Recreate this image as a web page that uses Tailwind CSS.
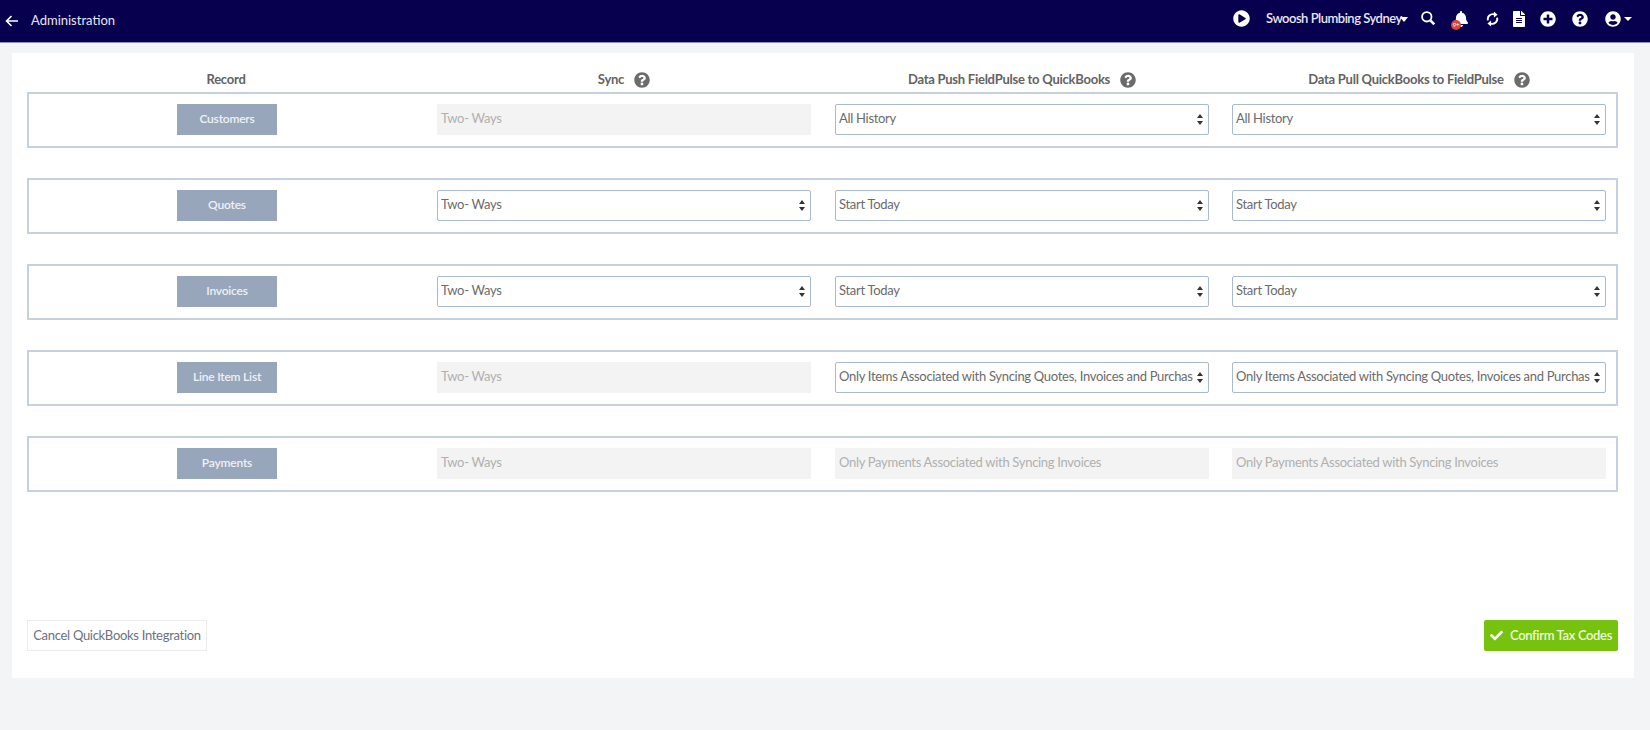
<!DOCTYPE html>
<html lang="en">
<head>
  <meta charset="UTF-8" />
  <meta name="viewport" content="width=device-width, initial-scale=1.0" />
  <title>Administration</title>
  <script src="https://cdn.jsdelivr.net/npm/@tailwindcss/browser@4"></script>
</head>
<body class="bg-[#f2f4f6] text-[#6b6b6b] font-['Lato',sans-serif] text-[13px] tracking-[-0.3px] h-[730px] overflow-hidden">
  <!-- Header -->
  <header class="h-[43px] bg-[#07004f] border-b border-[#8f8fbf] flex items-center justify-between text-[#e6e6f0]">
    <div class="flex items-center">
      <svg class="ml-[5px] w-[13px] h-[12px]" viewBox="0 0 13 12" fill="none" stroke="#fff" stroke-width="1.6"><path d="M13 6H1.5M6.5 1L1.5 6l5 5"/></svg>
      <span class="ml-[13px] tracking-normal">Administration</span>
    </div>
    <div class="flex items-center text-white mb-[5px]">
      <svg class="w-[17px] h-[17px]" viewBox="0 0 512 512" fill="currentColor"><path d="M256 8C119 8 8 119 8 256s111 248 248 248 248-111 248-248S393 8 256 8zm115.7 272l-176 101c-15.8 8.8-35.7-2.5-35.7-21V152c0-18.4 19.8-29.8 35.7-21l176 107c16.4 9.2 16.4 32.9 0 42z"/></svg>
      <span class="ml-[16px] font-semibold text-[#e6e6f0] w-[134px] tracking-[-0.5px] whitespace-nowrap">Swoosh Plumbing Sydney</span>
      <span class="w-0 h-0 border-x-[4.5px] border-x-transparent border-t-[5px] border-t-white mt-[2px]"></span>
      <svg class="ml-[13px] w-[14px] h-[14px] -mt-[1px]" viewBox="0 0 14 14" fill="none" stroke="currentColor"><circle cx="5.8" cy="5.8" r="4.7" stroke-width="1.8"/><path d="M9.3 9.3l4 4" stroke-width="2.6"/></svg>
      <span class="relative ml-[19px] w-[14px] h-[16px]">
        <svg class="w-[14px] h-[16px]" viewBox="0 0 448 512" fill="currentColor"><path d="M224 512c35.32 0 63.97-28.65 63.97-64H160.03c0 35.35 28.65 64 63.97 64zm215.39-149.71c-19.32-20.76-55.47-51.99-55.47-154.29 0-77.7-54.48-139.9-127.94-155.16V32c0-17.67-14.32-32-31.98-32s-31.98 14.33-31.98 32v20.84C118.56 68.1 64.08 130.3 64.08 208c0 102.3-36.15 133.53-55.47 154.29-6 6.45-8.66 14.16-8.61 21.71.11 16.4 12.98 32 32.1 32h383.8c19.12 0 32-15.6 32.1-32 .05-7.55-2.61-15.27-8.61-21.71z"/></svg>
        <span class="absolute left-[-3px] top-[9px] w-[10px] h-[10px] rounded-full bg-[#d8473f] text-white text-[6px] leading-[10px] text-center">9+</span>
      </span>
      <svg class="ml-[18px] w-[13px] h-[16px]" viewBox="0 0 14 16" fill="currentColor"><path d="M2 9.5A5.5 5.5 0 0 1 9 3M12 6.5A5.5 5.5 0 0 1 5 13" fill="none" stroke="currentColor" stroke-width="2"/><path d="M8.5 0v6.5l4-3.2zM5.5 9.5V16l-4-3.2z"/></svg>
      <svg class="ml-[14px] w-[12px] h-[16px]" viewBox="0 0 384 512" fill="currentColor"><path d="M224 136V0H24C10.7 0 0 10.7 0 24v464c0 13.3 10.7 24 24 24h336c13.3 0 24-10.7 24-24V160H248c-13.2 0-24-10.8-24-24zm64 236c0 6.6-5.4 12-12 12H108c-6.6 0-12-5.4-12-12v-8c0-6.6 5.4-12 12-12h168c6.6 0 12 5.4 12 12v8zm0-64c0 6.6-5.4 12-12 12H108c-6.6 0-12-5.4-12-12v-8c0-6.6 5.4-12 12-12h168c6.6 0 12 5.4 12 12v8zm0-72v8c0 6.6-5.4 12-12 12H108c-6.6 0-12-5.4-12-12v-8c0-6.6 5.4-12 12-12h168c6.6 0 12 5.4 12 12zm96-114.1v6.1H256V0h6.1c6.4 0 12.5 2.5 17 7l97.9 98c4.5 4.5 7 10.6 7 16.9z"/></svg>
      <svg class="ml-[15px] w-[16px] h-[16px]" viewBox="0 0 512 512" fill="currentColor"><path d="M256 8C119 8 8 119 8 256s111 248 248 248 248-111 248-248S393 8 256 8zm144 276c0 6.6-5.4 12-12 12h-92v92c0 6.6-5.4 12-12 12h-56c-6.6 0-12-5.4-12-12v-92h-92c-6.6 0-12-5.4-12-12v-56c0-6.6 5.4-12 12-12h92v-92c0-6.6 5.4-12 12-12h56c6.6 0 12 5.4 12 12v92h92c6.6 0 12 5.4 12 12v56z"/></svg>
      <svg class="ml-[16px] w-[16px] h-[16px]" viewBox="0 0 512 512" fill="currentColor"><path d="M504 256c0 136.997-111.043 248-248 248S8 392.997 8 256C8 119.083 119.043 8 256 8s248 111.083 248 248zM262.655 90c-54.497 0-89.255 22.957-116.549 63.758-3.536 5.286-2.353 12.415 2.715 16.258l34.699 26.31c5.205 3.947 12.621 3.008 16.665-2.122 17.864-22.658 30.113-35.797 57.303-35.797 20.429 0 45.698 13.148 45.698 32.958 0 14.976-12.363 22.667-32.534 33.976C247.128 238.528 216 254.941 216 296v4c0 6.627 5.373 12 12 12h56c6.627 0 12-5.373 12-12v-1.333c0-28.462 83.186-29.647 83.186-106.667 0-58.002-60.165-102-116.531-102zM256 338c-25.365 0-46 20.635-46 46 0 25.364 20.635 46 46 46s46-20.636 46-46c0-25.365-20.635-46-46-46z"/></svg>
      <svg class="ml-[17px] w-[16px] h-[16px]" viewBox="0 0 496 512" fill="currentColor"><path d="M248 8C111 8 0 119 0 256s111 248 248 248 248-111 248-248S385 8 248 8zm0 96c48.6 0 88 39.4 88 88s-39.4 88-88 88-88-39.4-88-88 39.4-88 88-88zm0 344c-58.7 0-111.3-26.6-146.5-68.2 18.8-35.4 55.6-59.8 98.5-59.8 2.4 0 4.8.4 7.1 1.1 13 4.2 26.6 6.9 40.9 6.9 14.3 0 28-2.7 40.9-6.9 2.3-.7 4.7-1.1 7.1-1.1 42.9 0 79.7 24.4 98.5 59.8C359.3 421.4 306.7 448 248 448z"/></svg>
      <span class="ml-[3px] mr-[18px] w-0 h-0 border-x-[4px] border-x-transparent border-t-[4px] border-t-white"></span>
    </div>
  </header>

  <!-- Card -->
  <main class="ml-[12px] mr-[16px] mt-[10px] h-[625px] bg-white pl-[15px] pr-[16px] flex flex-col">
    <!-- Column titles -->
    <div class="h-[39px] pt-[14px] flex items-center font-bold text-[#636363] tracking-[-0.25px] pl-[1px]">
      <div class="w-[409px] pr-[13px] text-center">Record</div>
      <div class="w-[374px] flex items-center justify-center gap-[10px]">Sync
        <svg class="w-[16px] h-[16px] text-[#6b6b6b]" viewBox="0 0 512 512" fill="currentColor"><path d="M504 256c0 136.997-111.043 248-248 248S8 392.997 8 256C8 119.083 119.043 8 256 8s248 111.083 248 248zM262.655 90c-54.497 0-89.255 22.957-116.549 63.758-3.536 5.286-2.353 12.415 2.715 16.258l34.699 26.31c5.205 3.947 12.621 3.008 16.665-2.122 17.864-22.658 30.113-35.797 57.303-35.797 20.429 0 45.698 13.148 45.698 32.958 0 14.976-12.363 22.667-32.534 33.976C247.128 238.528 216 254.941 216 296v4c0 6.627 5.373 12 12 12h56c6.627 0 12-5.373 12-12v-1.333c0-28.462 83.186-29.647 83.186-106.667 0-58.002-60.165-102-116.531-102zM256 338c-25.365 0-46 20.635-46 46 0 25.364 20.635 46 46 46s46-20.636 46-46c0-25.365-20.635-46-46-46z"/></svg>
      </div>
      <div class="ml-[24px] w-[374px] flex items-center justify-center gap-[10px]">Data Push FieldPulse to QuickBooks
        <svg class="w-[16px] h-[16px] text-[#6b6b6b]" viewBox="0 0 512 512" fill="currentColor"><path d="M504 256c0 136.997-111.043 248-248 248S8 392.997 8 256C8 119.083 119.043 8 256 8s248 111.083 248 248zM262.655 90c-54.497 0-89.255 22.957-116.549 63.758-3.536 5.286-2.353 12.415 2.715 16.258l34.699 26.31c5.205 3.947 12.621 3.008 16.665-2.122 17.864-22.658 30.113-35.797 57.303-35.797 20.429 0 45.698 13.148 45.698 32.958 0 14.976-12.363 22.667-32.534 33.976C247.128 238.528 216 254.941 216 296v4c0 6.627 5.373 12 12 12h56c6.627 0 12-5.373 12-12v-1.333c0-28.462 83.186-29.647 83.186-106.667 0-58.002-60.165-102-116.531-102zM256 338c-25.365 0-46 20.635-46 46 0 25.364 20.635 46 46 46s46-20.636 46-46c0-25.365-20.635-46-46-46z"/></svg>
      </div>
      <div class="ml-[23px] w-[374px] flex items-center justify-center gap-[10px]">Data Pull QuickBooks to FieldPulse
        <svg class="w-[16px] h-[16px] text-[#6b6b6b]" viewBox="0 0 512 512" fill="currentColor"><path d="M504 256c0 136.997-111.043 248-248 248S8 392.997 8 256C8 119.083 119.043 8 256 8s248 111.083 248 248zM262.655 90c-54.497 0-89.255 22.957-116.549 63.758-3.536 5.286-2.353 12.415 2.715 16.258l34.699 26.31c5.205 3.947 12.621 3.008 16.665-2.122 17.864-22.658 30.113-35.797 57.303-35.797 20.429 0 45.698 13.148 45.698 32.958 0 14.976-12.363 22.667-32.534 33.976C247.128 238.528 216 254.941 216 296v4c0 6.627 5.373 12 12 12h56c6.627 0 12-5.373 12-12v-1.333c0-28.462 83.186-29.647 83.186-106.667 0-58.002-60.165-102-116.531-102zM256 338c-25.365 0-46 20.635-46 46 0 25.364 20.635 46 46 46s46-20.636 46-46c0-25.365-20.635-46-46-46z"/></svg>
      </div>
    </div>

    <!-- Record rows -->
    <div class="flex flex-col gap-[30px]">
      <!-- Customers -->
      <div class="h-[56px] pb-[2px] border-2 border-[#c5d1e0] flex items-center">
        <div class="w-[396px] mr-[12px] flex justify-center"><div class="w-[100px] h-[31px] bg-[#98a6bc] flex items-center justify-center text-[#eef1f5] text-[12px] tracking-[-0.2px] font-semibold">Customers</div></div>
        <div class="w-[374px] h-[31px] bg-[#f3f3f3] flex items-center px-[4px] text-[#b0b0b0]">Two- Ways</div>
        <div class="relative ml-[24px] w-[374px] h-[31px]">
          <select class="appearance-none w-full h-full bg-white border border-[#a9bace] rounded-[2px] pl-[3px] pr-[15px]"><option>All History</option></select>
          <svg class="absolute right-[6px] top-[10px] w-[6px] h-[11px]" viewBox="0 0 6 11" fill="#333"><path d="M3 0l3 4H0zM3 11L0 7h6z"/></svg>
        </div>
        <div class="relative ml-[23px] w-[374px] h-[31px]">
          <select class="appearance-none w-full h-full bg-white border border-[#a9bace] rounded-[2px] pl-[3px] pr-[15px]"><option>All History</option></select>
          <svg class="absolute right-[6px] top-[10px] w-[6px] h-[11px]" viewBox="0 0 6 11" fill="#333"><path d="M3 0l3 4H0zM3 11L0 7h6z"/></svg>
        </div>
      </div>

      <!-- Quotes -->
      <div class="h-[56px] pb-[2px] border-2 border-[#c5d1e0] flex items-center">
        <div class="w-[396px] mr-[12px] flex justify-center"><div class="w-[100px] h-[31px] bg-[#98a6bc] flex items-center justify-center text-[#eef1f5] text-[12px] tracking-[-0.2px] font-semibold">Quotes</div></div>
        <div class="relative w-[374px] h-[31px]">
          <select class="appearance-none w-full h-full bg-white border border-[#a9bace] rounded-[2px] pl-[3px] pr-[15px]"><option>Two- Ways</option></select>
          <svg class="absolute right-[6px] top-[10px] w-[6px] h-[11px]" viewBox="0 0 6 11" fill="#333"><path d="M3 0l3 4H0zM3 11L0 7h6z"/></svg>
        </div>
        <div class="relative ml-[24px] w-[374px] h-[31px]">
          <select class="appearance-none w-full h-full bg-white border border-[#a9bace] rounded-[2px] pl-[3px] pr-[15px]"><option>Start Today</option></select>
          <svg class="absolute right-[6px] top-[10px] w-[6px] h-[11px]" viewBox="0 0 6 11" fill="#333"><path d="M3 0l3 4H0zM3 11L0 7h6z"/></svg>
        </div>
        <div class="relative ml-[23px] w-[374px] h-[31px]">
          <select class="appearance-none w-full h-full bg-white border border-[#a9bace] rounded-[2px] pl-[3px] pr-[15px]"><option>Start Today</option></select>
          <svg class="absolute right-[6px] top-[10px] w-[6px] h-[11px]" viewBox="0 0 6 11" fill="#333"><path d="M3 0l3 4H0zM3 11L0 7h6z"/></svg>
        </div>
      </div>

      <!-- Invoices -->
      <div class="h-[56px] pb-[2px] border-2 border-[#c5d1e0] flex items-center">
        <div class="w-[396px] mr-[12px] flex justify-center"><div class="w-[100px] h-[31px] bg-[#98a6bc] flex items-center justify-center text-[#eef1f5] text-[12px] tracking-[-0.2px] font-semibold">Invoices</div></div>
        <div class="relative w-[374px] h-[31px]">
          <select class="appearance-none w-full h-full bg-white border border-[#a9bace] rounded-[2px] pl-[3px] pr-[15px]"><option>Two- Ways</option></select>
          <svg class="absolute right-[6px] top-[10px] w-[6px] h-[11px]" viewBox="0 0 6 11" fill="#333"><path d="M3 0l3 4H0zM3 11L0 7h6z"/></svg>
        </div>
        <div class="relative ml-[24px] w-[374px] h-[31px]">
          <select class="appearance-none w-full h-full bg-white border border-[#a9bace] rounded-[2px] pl-[3px] pr-[15px]"><option>Start Today</option></select>
          <svg class="absolute right-[6px] top-[10px] w-[6px] h-[11px]" viewBox="0 0 6 11" fill="#333"><path d="M3 0l3 4H0zM3 11L0 7h6z"/></svg>
        </div>
        <div class="relative ml-[23px] w-[374px] h-[31px]">
          <select class="appearance-none w-full h-full bg-white border border-[#a9bace] rounded-[2px] pl-[3px] pr-[15px]"><option>Start Today</option></select>
          <svg class="absolute right-[6px] top-[10px] w-[6px] h-[11px]" viewBox="0 0 6 11" fill="#333"><path d="M3 0l3 4H0zM3 11L0 7h6z"/></svg>
        </div>
      </div>

      <!-- Line Item List -->
      <div class="h-[56px] pb-[2px] border-2 border-[#c5d1e0] flex items-center">
        <div class="w-[396px] mr-[12px] flex justify-center"><div class="w-[100px] h-[31px] bg-[#98a6bc] flex items-center justify-center text-[#eef1f5] text-[12px] tracking-[-0.2px] font-semibold">Line Item List</div></div>
        <div class="w-[374px] h-[31px] bg-[#f3f3f3] flex items-center px-[4px] text-[#b0b0b0]">Two- Ways</div>
        <div class="relative ml-[24px] w-[374px] h-[31px]">
          <select class="appearance-none w-full h-full bg-white border border-[#a9bace] rounded-[2px] pl-[3px] pr-[15px]"><option>Only Items Associated with Syncing Quotes, Invoices and Purchase Orders</option></select>
          <svg class="absolute right-[6px] top-[10px] w-[6px] h-[11px]" viewBox="0 0 6 11" fill="#333"><path d="M3 0l3 4H0zM3 11L0 7h6z"/></svg>
        </div>
        <div class="relative ml-[23px] w-[374px] h-[31px]">
          <select class="appearance-none w-full h-full bg-white border border-[#a9bace] rounded-[2px] pl-[3px] pr-[15px]"><option>Only Items Associated with Syncing Quotes, Invoices and Purchase Orders</option></select>
          <svg class="absolute right-[6px] top-[10px] w-[6px] h-[11px]" viewBox="0 0 6 11" fill="#333"><path d="M3 0l3 4H0zM3 11L0 7h6z"/></svg>
        </div>
      </div>

      <!-- Payments -->
      <div class="h-[56px] pb-[2px] border-2 border-[#c5d1e0] flex items-center">
        <div class="w-[396px] mr-[12px] flex justify-center"><div class="w-[100px] h-[31px] bg-[#98a6bc] flex items-center justify-center text-[#eef1f5] text-[12px] tracking-[-0.2px] font-semibold">Payments</div></div>
        <div class="w-[374px] h-[31px] bg-[#f3f3f3] flex items-center px-[4px] text-[#b0b0b0]">Two- Ways</div>
        <div class="ml-[24px] w-[374px] h-[31px] bg-[#f3f3f3] flex items-center px-[4px] text-[#b0b0b0]">Only Payments Associated with Syncing Invoices</div>
        <div class="ml-[23px] w-[374px] h-[31px] bg-[#f3f3f3] flex items-center px-[4px] text-[#b0b0b0]">Only Payments Associated with Syncing Invoices</div>
      </div>
    </div>

    <!-- Footer buttons -->
    <div class="mt-auto mb-[27px] flex justify-between">
      <button class="h-[31px] w-[180px] border border-[#ececec] bg-white text-[#6b7280]">Cancel QuickBooks Integration</button>
      <button class="h-[31px] w-[134px] rounded-[2px] bg-[#76c20e] text-[#eef8dc] font-semibold tracking-[-0.35px] flex items-center justify-center gap-[7px]">
        <svg class="w-[13px] h-[13px]" viewBox="0 0 512 512" fill="#fff"><path d="M173.898 439.404l-166.4-166.4c-9.997-9.997-9.997-26.206 0-36.204l36.203-36.204c9.997-9.998 26.207-9.998 36.204 0L192 312.69 432.095 72.596c9.997-9.997 26.207-9.997 36.204 0l36.203 36.204c9.997 9.997 9.997 26.206 0 36.204l-294.4 294.401c-9.998 9.997-26.207 9.997-36.204-.001z"/></svg>
        Confirm Tax Codes
      </button>
    </div>
  </main>
</body>
</html>
